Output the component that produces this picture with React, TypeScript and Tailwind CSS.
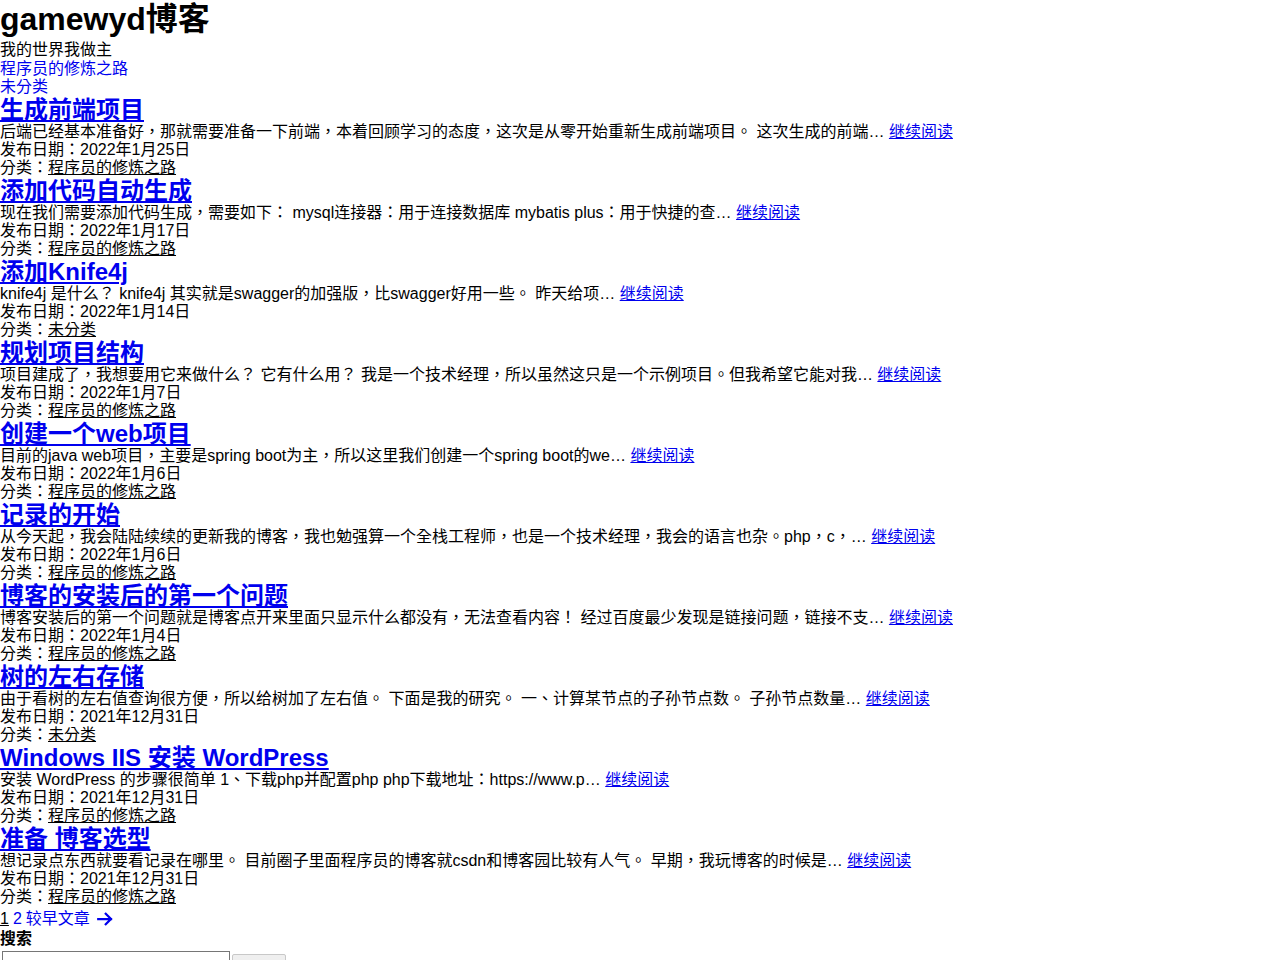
const posts = [
  {
    title: '生成前端项目',
    excerpt: '后端已经基本准备好，那就需要准备一下前端，本着回顾学习的态度，这次是从零开始重新生成前端项目。 这次生成的前端…',
    date: '2022年1月25日',
    cat: '程序员的修炼之路',
  },
  {
    title: '添加代码自动生成',
    excerpt: '现在我们需要添加代码生成，需要如下： mysql连接器：用于连接数据库 mybatis plus：用于快捷的查…',
    date: '2022年1月17日',
    cat: '程序员的修炼之路',
  },
  {
    title: '添加Knife4j',
    excerpt: 'knife4j 是什么？ knife4j 其实就是swagger的加强版，比swagger好用一些。 昨天给项…',
    date: '2022年1月14日',
    cat: '未分类',
  },
  {
    title: '规划项目结构',
    excerpt: '项目建成了，我想要用它来做什么？ 它有什么用？ 我是一个技术经理，所以虽然这只是一个示例项目。但我希望它能对我…',
    date: '2022年1月7日',
    cat: '程序员的修炼之路',
  },
  {
    title: '创建一个web项目',
    excerpt: '目前的java web项目，主要是spring boot为主，所以这里我们创建一个spring boot的we…',
    date: '2022年1月6日',
    cat: '程序员的修炼之路',
  },
  {
    title: '记录的开始',
    excerpt: '从今天起，我会陆陆续续的更新我的博客，我也勉强算一个全栈工程师，也是一个技术经理，我会的语言也杂。php，c，…',
    date: '2022年1月6日',
    cat: '程序员的修炼之路',
  },
  {
    title: '博客的安装后的第一个问题',
    excerpt: '博客安装后的第一个问题就是博客点开来里面只显示什么都没有，无法查看内容！ 经过百度最少发现是链接问题，链接不支…',
    date: '2022年1月4日',
    cat: '程序员的修炼之路',
  },
  {
    title: '树的左右存储',
    excerpt: '由于看树的左右值查询很方便，所以给树加了左右值。 下面是我的研究。 一、计算某节点的子孙节点数。 子孙节点数量…',
    date: '2021年12月31日',
    cat: '未分类',
  },
  {
    title: 'Windows IIS 安装 WordPress',
    excerpt: '安装 WordPress 的步骤很简单 1、下载php并配置php php下载地址：https://www.p…',
    date: '2021年12月31日',
    cat: '程序员的修炼之路',
  },
  {
    title: '准备 博客选型',
    excerpt: '想记录点东西就要看记录在哪里。 目前圈子里面程序员的博客就csdn和博客园比较有人气。 早期，我玩博客的时候是…',
    date: '2021年12月31日',
    cat: '程序员的修炼之路',
  },
];

function Post({ p }: { p: (typeof posts)[number] }) {
  return (
    <article>
      <h2 className="text-[24px] leading-[27px] font-bold">
        <a href="#" className="text-[#0000ee] underline">{p.title}</a>
      </h2>
      <p>
        {p.excerpt} <a href="#" className="text-[#0000ee] underline">继续阅读</a>
      </p>
      <div>发布日期：{p.date}</div>
      <div>
        分类：<a href="#" className="underline">{p.cat}</a>
      </div>
    </article>
  );
}

export default function App() {
  return (
    <div
      className="bg-white text-black text-[16px] leading-[18px] h-[960px] overflow-hidden"
      style={{ fontFamily: '"Liberation Sans", "Noto Sans CJK TC", sans-serif' }}
    >
      <header>
        <h1 className="text-[32px] leading-[39px] font-bold">gamewyd博客</h1>
        <p className="leading-[21px]">我的世界我做主</p>
        <nav className="flex flex-col text-[#0000ee]">
          <a href="#">程序员的修炼之路</a>
          <a href="#">未分类</a>
        </nav>
      </header>

      <main>
        {posts.map(p => (
          <Post key={p.title} p={p} />
        ))}
      </main>

      <nav className="flex items-center gap-[4px] mt-[4px] text-[#0000ee]">
        <span className="text-black underline">1</span>
        <a href="#">2</a>
        <a href="#" className="flex items-center gap-[6px]">
          较早文章
          <svg width="18" height="18" viewBox="0 0 24 24" fill="none" stroke="currentColor" strokeWidth="3" strokeLinecap="square">
            <path d="M3 12h17M13 5l7 7-7 7" />
          </svg>
        </a>
      </nav>

      <aside className="mt-[2px]">
        <h2 className="font-bold">搜索</h2>
        <form className="flex items-start gap-[2px] mt-[3px] ml-[2px]">
          <input className="w-[228px] h-[24px] border border-[#767676] px-1" />
          <button type="button" className="w-[54px] h-[48px] mt-[3px] border border-[#c8c8c8] bg-[#efefef] rounded-[2px] text-[13px]">
            搜索
          </button>
        </form>
      </aside>
    </div>
  );
}
